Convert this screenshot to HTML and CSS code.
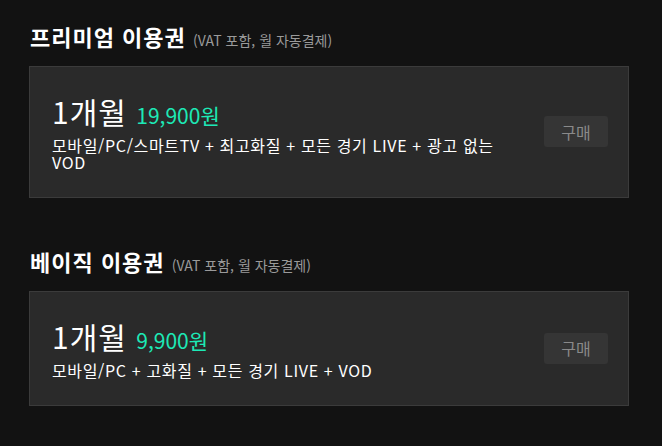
FILE: index.html
```html
<!DOCTYPE html>
<html lang="ko">
<head>
    <meta charset="UTF-8">
    <meta name="viewport" content="width=device-width, initial-scale=1.0">
    <title>이용권 구매</title>
    <link rel="stylesheet" href="styles.css">
</head>
<body>
    <!-- 프리미엄 -->
    <section class="plan">
        <h2 class="plan-title">프리미엄 이용권 <span class="plan-note">(VAT 포함, 월 자동결제)</span></h2>
        <div class="plan-card">
            <div class="plan-info">
                <p class="plan-period">1개월 <span class="plan-price">19,900원</span></p>
                <p class="plan-desc">모바일/PC/스마트TV + 최고화질 + 모든 경기 LIVE + 광고 없는 VOD</p>
            </div>
            <button class="buy-btn">구매</button>
        </div>
    </section>

    <!-- 베이직 -->
    <section class="plan">
        <h2 class="plan-title">베이직 이용권 <span class="plan-note">(VAT 포함, 월 자동결제)</span></h2>
        <div class="plan-card">
            <div class="plan-info">
                <p class="plan-period">1개월 <span class="plan-price">9,900원</span></p>
                <p class="plan-desc">모바일/PC + 고화질 + 모든 경기 LIVE + VOD</p>
            </div>
            <button class="buy-btn">구매</button>
        </div>
    </section>
</body>
</html>
```

FILE: styles.css
```css
body {
    margin: 0;
    padding: 18px 0 0;
    background-color: #121212;
    color: #fff;
    font-family: "Noto Sans CJK KR", "Noto Sans", sans-serif;
}
.plan {
    width: 600px;
    margin: 0 0 45px 29px;
}
.plan-title {
    margin: 0 0 8px 1px;
    font-size: 22px;
    font-weight: 700;
    letter-spacing: 1px;
    line-height: 36px;
}
.plan-note {
    font-size: 14px;
    font-weight: 400;
    letter-spacing: 0;
    color: #9a9a9a;
}
.plan-card {
    display: flex;
    align-items: center;
    justify-content: space-between;
    padding: 25px 20px 26px 22px;
    background-color: #2a2a2a;
    border: 1px solid #3b3b3b;
}
.plan-info {
    width: 465px;
}
.plan-period {
    margin: 0;
    font-size: 30px;
    letter-spacing: 1px;
    line-height: 38px;
}
.plan-price {
    font-size: 21px;
    letter-spacing: 0;
    color: #1de9b6;
}
.plan-desc {
    margin: 3px 0 0;
    font-size: 16px;
    letter-spacing: 0.65px;
    line-height: 17px;
}
.buy-btn {
    width: 64px;
    height: 31px;
    padding: 0;
    background-color: #353535;
    color: #8a8a8a;
    border: none;
    border-radius: 3px;
    font-family: inherit;
    font-size: 16px;
    cursor: pointer;
}
```
